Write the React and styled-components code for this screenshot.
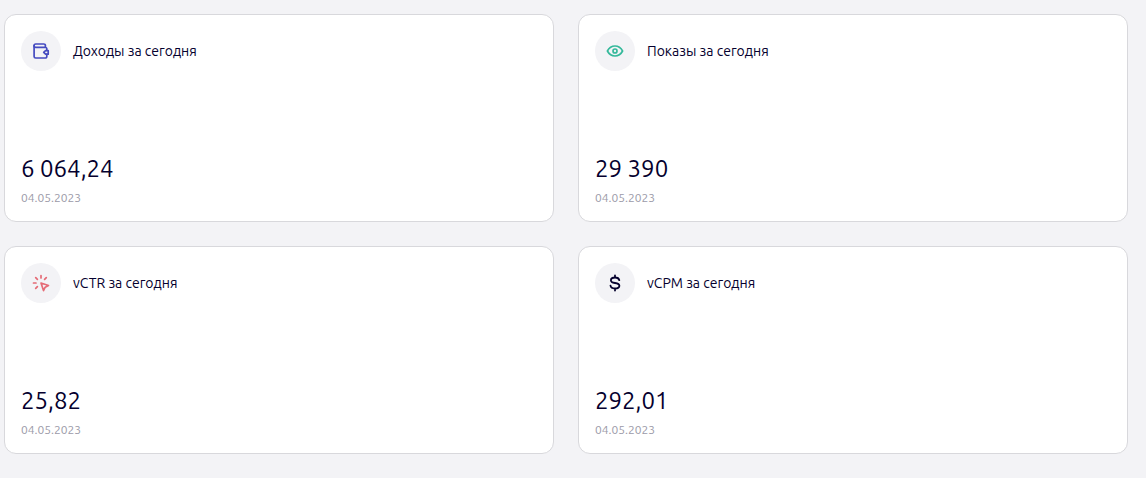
import React from 'react';
import styled, { createGlobalStyle } from 'styled-components';

const GlobalStyle = createGlobalStyle`
  * {
    box-sizing: border-box;
  }

  body {
    margin: 0;
    background-color: #f3f3f6;
    color: #05002e;
    font-family: Ubuntu, 'Noto Sans', 'Open Sans', sans-serif;
  }
`;

const Dashboard = styled.main`
  display: grid;
  grid-template-columns: repeat(2, minmax(0, 1fr));
  gap: 24px;
  padding: 14px 18px 24px 4px;
`;

const Card = styled.section`
  display: flex;
  flex-direction: column;
  justify-content: space-between;
  min-height: 208px;
  padding: 16px;
  background-color: white;
  border: 1px solid #d8d8dc;
  border-radius: 12px;
`;

const CardHeader = styled.header`
  display: flex;
  align-items: center;
  gap: 12px;
`;

const IconCircle = styled.span`
  display: flex;
  flex-shrink: 0;
  align-items: center;
  justify-content: center;
  width: 40px;
  height: 40px;
  border-radius: 50%;
  background-color: #f3f3f6;
  color: ${({ $color }) => $color};
`;

const Icon = styled.svg`
  width: 20px;
  height: 20px;
  fill: none;
  stroke: currentColor;
  stroke-width: 1.7;
  stroke-linecap: round;
  stroke-linejoin: round;
`;

const Title = styled.h2`
  margin: 0;
  font-size: 14px;
  font-weight: 400;
  line-height: 20px;
`;

const Value = styled.p`
  margin: 0;
  font-size: 24px;
  line-height: 32px;
`;

const DateLabel = styled.time`
  display: block;
  margin-top: 6px;
  color: #9b9aa8;
  font-size: 12px;
  line-height: 14px;
`;

const WalletIcon = () => (
  <Icon viewBox="0 0 20 20" aria-hidden="true">
    <path d="M14.4 6.3V4.6A1.6 1.6 0 0 0 12.8 3H4.7a1.65 1.65 0 0 0 0 3.3H14.3a1.5 1.5 0 0 1 1.5 1.5v1.5" />
    <path d="M3.1 4.6v10.8A1.6 1.6 0 0 0 4.7 17h9.6a1.5 1.5 0 0 0 1.5-1.5v-2.1" />
    <path d="M17.2 9.6v3.6h-2.6l-1.9-1.8 1.9-1.8Z" />
  </Icon>
);

const EyeIcon = () => (
  <Icon viewBox="0 0 20 20" aria-hidden="true">
    <path d="M2.4 10C4.2 6.6 6.8 5 10 5s5.8 1.6 7.6 5c-1.8 3.4-4.4 5-7.6 5s-5.8-1.6-7.6-5Z" />
    <circle cx="10" cy="10" r="2" />
  </Icon>
);

const ClickIcon = () => (
  <Icon viewBox="0 0 20 20" aria-hidden="true">
    <path d="M2.5 10H5M10 2.5V5M4.7 4.7l1.7 1.7M15.3 4.7l-1.7 1.7M6.4 13.6l-1.7 1.7" />
    <path d="m10 10 7.5 2.5-3.3 1.7-1.7 3.3Z" />
  </Icon>
);

const DollarIcon = () => (
  <Icon viewBox="0 0 20 20" aria-hidden="true">
    <path
      strokeWidth="1.8"
      d="M14.3 7.2C13.9 5.4 12.3 4.5 10 4.5S5.9 5.5 5.9 7.2C5.9 9 7.5 9.6 10 10s4.4 1 4.4 2.8-1.7 2.7-4.4 2.7-4.2-1-4.5-2.8M10 2.4v2M10 15.6v2"
    />
  </Icon>
);

const metrics = [
  { title: 'Доходы за сегодня', value: '6 064,24', color: '#454bc0', icon: WalletIcon },
  { title: 'Показы за сегодня', value: '29 390', color: '#35b99b', icon: EyeIcon },
  { title: 'vCTR за сегодня', value: '25,82', color: '#e56b76', icon: ClickIcon },
  { title: 'vCPM за сегодня', value: '292,01', color: '#05002e', icon: DollarIcon },
];

const MetricCard = ({ title, value, color, icon: MetricIcon }) => (
  <Card>
    <CardHeader>
      <IconCircle $color={color}>
        <MetricIcon />
      </IconCircle>
      <Title>{title}</Title>
    </CardHeader>
    <div>
      <Value>{value}</Value>
      <DateLabel dateTime="2023-05-04">04.05.2023</DateLabel>
    </div>
  </Card>
);

const App = () => (
  <>
    <GlobalStyle />
    <Dashboard>
      {metrics.map((metric) => (
        <MetricCard key={metric.title} {...metric} />
      ))}
    </Dashboard>
  </>
);

export default App;
